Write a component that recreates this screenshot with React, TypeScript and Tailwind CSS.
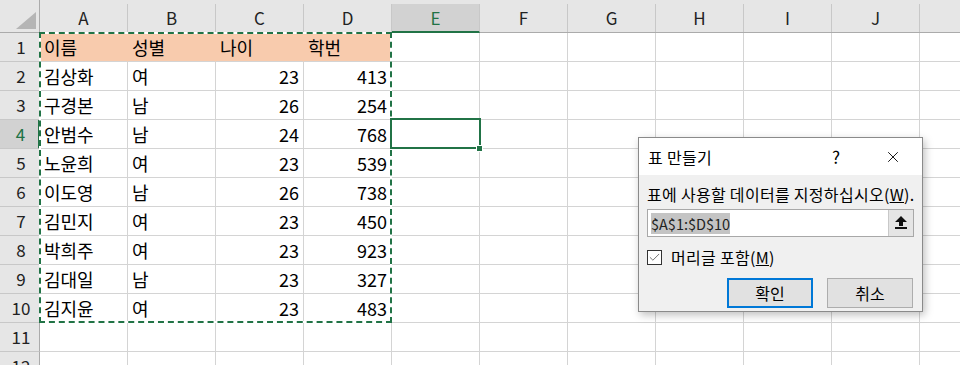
import { Check, X } from "lucide-react";

const FONT = { fontFamily: '"Noto Sans CJK KR", "Noto Sans", sans-serif' };

const COLS = ["A", "B", "C", "D", "E", "F", "G", "H", "I", "J", ""];

const ROWS: (string | number)[][] = [
  ["이름", "성별", "나이", "학번"],
  ["김상화", "여", 23, 413],
  ["구경본", "남", 26, 254],
  ["안범수", "남", 24, 768],
  ["노윤희", "여", 23, 539],
  ["이도영", "남", 26, 738],
  ["김민지", "여", 23, 450],
  ["박희주", "여", 23, 923],
  ["김대일", "남", 23, 327],
  ["김지윤", "여", 23, 483],
  [],
  [],
];

const ColumnHeader = () => (
  <div className="flex h-[33px] shrink-0 bg-[#e6e6e6] border-b border-[#ababab]">
    {/* corner */}
    <div className="relative w-[40px] shrink-0 border-r border-[#ababab]">
      <svg className="absolute left-[16px] top-[12px]" width="20" height="17" viewBox="0 0 20 17">
        <polygon points="20,0 20,17 0,17" fill="#b5b5b5" />
      </svg>
    </div>
    {COLS.map((c) => {
      const active = c === "E";
      return (
        <div key={c || "k"} className="w-[88px] shrink-0 pt-[4px] flex flex-col">
          <div
            className={`flex-1 flex items-center justify-center text-[17px] border-r border-[#c8c8c8] ${
              active ? "bg-[#d2d2d2] text-[#217346] -mb-[1px] border-b-2 border-b-[#217346]" : "text-[#222]"
            }`}
          >
            {c}
          </div>
        </div>
      );
    })}
  </div>
);

const Row = ({ index, cells }: { index: number; cells: (string | number)[] }) => {
  const active = index === 4;
  const filled = index === 1;
  return (
    <div className="flex h-[29px] shrink-0">
      <div
        className={`w-[40px] shrink-0 flex items-center justify-center text-[17px] border-b border-[#c8c8c8] pl-[3px] ${
          active
            ? "bg-[#d2d2d2] text-[#217346] border-r-2 border-r-[#217346]"
            : "bg-[#e6e6e6] text-[#222] border-r border-r-[#ababab]"
        }`}
      >
        {index}
      </div>
      {COLS.map((c, i) => {
        const v = cells[i];
        const isNum = typeof v === "number";
        const fill = filled && i < 4;
        return (
          <div
            key={c || "k"}
            className={`w-[88px] shrink-0 flex items-center text-[18px] text-black border-b border-[#d4d4d4] px-[4px] ${
              fill ? "bg-[#f8cbad] border-r border-r-[#f8cbad]" : "bg-white border-r border-r-[#d4d4d4]"
            } ${isNum ? "justify-end" : "justify-start"}`}
          >
            {v}
          </div>
        );
      })}
    </div>
  );
};

const CreateTableDialog = () => (
  <div className="absolute left-[638px] top-[137px] w-[285px] h-[175px] border border-[#8a8a8a] bg-[#f0f0f0] shadow-[2px_3px_8px_rgba(0,0,0,0.25)] flex flex-col">
    {/* Title bar */}
    <div className="h-[37px] bg-white flex items-center pl-[9px] text-[16px] text-black">
      <span className="flex-1 tracking-[0.3px]">표 만들기</span>
      <span className="w-[30px] text-center text-[17px] mr-[33px]">?</span>
      <X className="w-[18px] h-[18px] mr-[20px]" strokeWidth={1.2} />
    </div>

    {/* Body */}
    <div className="flex-1 px-[8px] pt-[9px] flex flex-col">
      <div className="text-[16px] tracking-[0.3px] text-black leading-[20px] whitespace-nowrap">
        표에 사용할 데이터를 지정하십시오(<span className="underline">W</span>).
      </div>
      <div className="mt-[5px] h-[28px] flex bg-white border border-[#a8a8a8]">
        <div className="flex-1 flex items-center pl-[3px]">
          <span className="bg-[#c4c4c4] text-[14.5px] leading-[21px] text-[#222]">$A$1:$D$10</span>
        </div>
        <div className="w-[25px] bg-[#e5e5e5] border-l border-[#c8c8c8] flex items-center justify-center">
          <svg width="12" height="14" viewBox="0 0 12 14">
            <polygon points="6,0 12,6 8,6 8,10 4,10 4,6 0,6" fill="#111" />
            <rect x="0" y="11" width="12" height="2" fill="#111" />
          </svg>
        </div>
      </div>
      <div className="mt-[10px] flex items-center">
        <div className="w-[15px] h-[15px] border border-[#333] bg-white flex items-center justify-center">
          <Check className="w-[13px] h-[13px] text-[#555]" strokeWidth={1.5} />
        </div>
        <span className="ml-[9px] text-[16px] tracking-[0.3px] text-black leading-[20px]">
          머리글 포함(<span className="underline">M</span>)
        </span>
      </div>
      <div className="mt-[11px] flex justify-end gap-[14px] pr-[1px]">
        <button className="w-[86px] h-[30px] bg-[#e1e1e1] border-2 border-[#0078d7] text-[16px] text-black">
          확인
        </button>
        <button className="w-[86px] h-[30px] bg-[#e1e1e1] border border-[#adadad] text-[16px] text-black">
          취소
        </button>
      </div>
    </div>
  </div>
);

export default function App() {
  return (
    <div className="relative w-[960px] h-[365px] overflow-hidden bg-white flex" style={FONT}>
      {/* window edge */}
      <div className="w-[3px] shrink-0 flex flex-col">
        <div className="h-[36px] bg-[#1f1f1f]" />
        <div className="flex-1 bg-[#3c3c3c]" />
      </div>

      <div className="flex-1 flex flex-col -ml-[3px] overflow-hidden">
        <ColumnHeader />
        {ROWS.map((cells, i) => (
          <Row key={i} index={i + 1} cells={cells} />
        ))}
      </div>

      {/* copy marquee around A1:D10 */}
      <div className="absolute left-[39px] top-[32px] w-[353px] h-[291px] border-2 border-white">
        <div className="absolute -inset-[2px] border-2 border-dashed border-[#217346]" />
      </div>

      {/* active cell E4 */}
      <div className="absolute left-[390px] top-[118px] w-[91px] h-[31px] border-2 border-[#217346]" />
      <div className="absolute left-[476px] top-[145px] w-[7px] h-[7px] bg-[#217346] border border-white" />

      <CreateTableDialog />
    </div>
  );
}
